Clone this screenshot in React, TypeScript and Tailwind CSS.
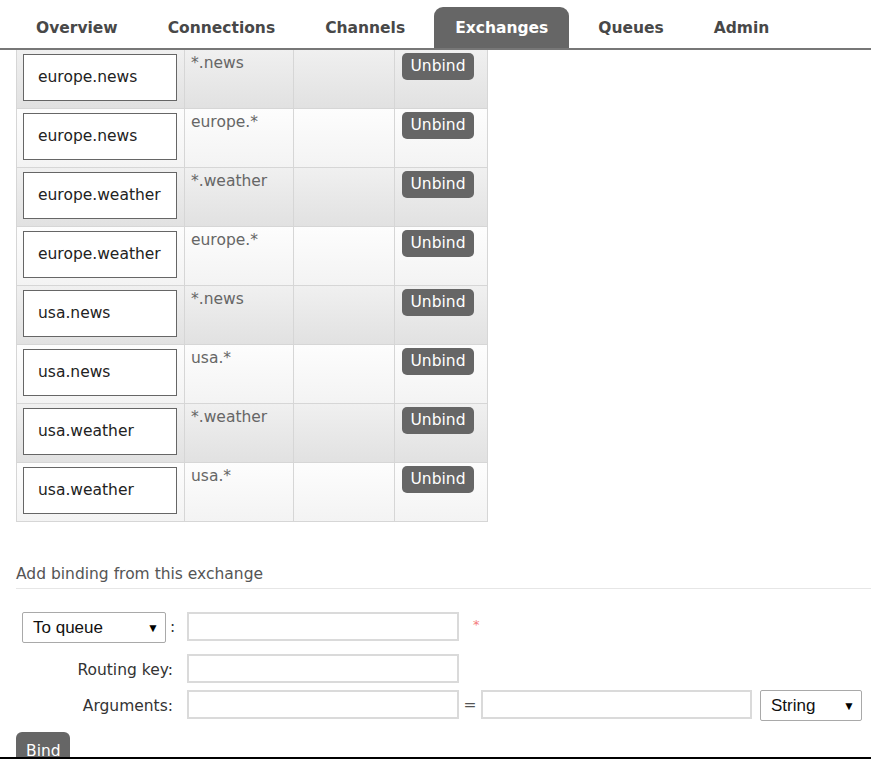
const tabs = ["Overview", "Connections", "Channels", "Exchanges", "Queues", "Admin"];

const bindings = [
  { dest: "europe.news", key: "*.news" },
  { dest: "europe.news", key: "europe.*" },
  { dest: "europe.weather", key: "*.weather" },
  { dest: "europe.weather", key: "europe.*" },
  { dest: "usa.news", key: "*.news" },
  { dest: "usa.news", key: "usa.*" },
  { dest: "usa.weather", key: "*.weather" },
  { dest: "usa.weather", key: "usa.*" },
];

function FakeSelect({ label, className }: { label: string; className: string }) {
  return (
    <div
      className={`flex items-center justify-between border border-[#a9a9a9] rounded-[2px] bg-white pl-[10px] pr-[6px] text-[17px] text-[#111] ${className}`}
      style={{ fontFamily: '"Liberation Sans", Arial, sans-serif' }}
    >
      <span>{label}</span>
      <span className="text-[12px] text-black">▼</span>
    </div>
  );
}

export default function App() {
  return (
    <div
      className="w-[871px] h-[760px] overflow-hidden bg-white flex flex-col text-[15.5px] text-[#333]"
      style={{ fontFamily: '"DejaVu Sans", Verdana, sans-serif' }}
    >
      <div className="h-[757px] overflow-hidden">
        {/* Top navigation */}
        <div className="h-[50px] pt-[7px] pl-[15px] flex items-end gap-2 border-b-2 border-[#777]">
          {tabs.map((t) => (
            <div
              key={t}
              className={`h-[41px] px-[21px] pt-[2px] flex items-center font-bold ${
                t === "Exchanges"
                  ? "bg-[#666] text-white rounded-t-[9px]"
                  : "text-[#484848]"
              }`}
            >
              {t}
            </div>
          ))}
        </div>

        {/* Bindings table */}
        <div className="ml-[16px] w-[472px] border-l border-[#d6d6d6]">
          {bindings.map((b, i) => (
            <div
              key={i}
              className={`grid grid-cols-[168px_109px_101px_93px] h-[59px] bg-gradient-to-b ${
                i % 2 === 0
                  ? "from-[#f0f0f0] to-[#e1e1e1]"
                  : "from-[#fdfdfd] to-[#f3f3f3]"
              }`}
            >
              <div className="border-r border-b border-[#d6d6d6] pl-[6px] pt-[4px]">
                <div className="w-[154px] h-[47px] border border-[#666] bg-white flex items-center pl-[14px] pt-[1px] text-[#222]">
                  {b.dest}
                </div>
              </div>
              <div className="border-r border-b border-[#d6d6d6] pl-[6px] pt-[2px] text-[#666]">
                {b.key}
              </div>
              <div className="border-r border-b border-[#d6d6d6]" />
              <div className="border-r border-b border-[#d6d6d6] pl-[7px] pt-[3px]">
                <button className="w-[72px] h-[27px] rounded-[5px] bg-[#666] text-white flex items-center justify-center">
                  Unbind
                </button>
              </div>
            </div>
          ))}
        </div>

        {/* Add binding */}
        <div className="ml-[16px] mt-[42px] h-[25px] border-b border-[#e6e6e6] text-[#555] leading-[20px]">
          Add binding from this exchange
        </div>

        <div className="ml-[16px] mt-[23px] flex flex-col">
          <div className="flex items-center h-[31px]">
            <div className="w-[171px] flex items-center">
              <FakeSelect label="To queue" className="ml-[6px] w-[144px] h-[31px]" />
              <span className="ml-[4px]">:</span>
            </div>
            <div className="w-[272px] h-[29px] border-2 border-[#dadada] bg-white self-start" />
            <span className="ml-[14px] text-[13px] text-[#f47c7c] -mt-[6px]">*</span>
          </div>

          <div className="flex items-center h-[29px] mt-[11px]">
            <div className="w-[171px] text-right pr-[14px] pt-[4px]">Routing key:</div>
            <div className="w-[272px] h-[29px] border-2 border-[#dadada] bg-white" />
          </div>

          <div className="flex items-center h-[31px] mt-[7px]">
            <div className="w-[171px] text-right pr-[14px] pt-[2px]">Arguments:</div>
            <div className="w-[272px] h-[29px] border-2 border-[#dadada] bg-white self-start" />
            <span className="w-[22px] text-center text-[#555]">=</span>
            <div className="w-[271px] h-[29px] border-2 border-[#dadada] bg-white self-start" />
            <FakeSelect label="String" className="ml-[8px] w-[102px] h-[31px]" />
          </div>

          <div className="mt-[11px]">
            <button className="w-[54px] h-[34px] rounded-t-[6px] bg-[#666] text-white pl-[10px] text-left pt-[8px] flex items-start">
              Bind
            </button>
          </div>
        </div>
      </div>
      <div className="h-[2px] bg-black" />
    </div>
  );
}
